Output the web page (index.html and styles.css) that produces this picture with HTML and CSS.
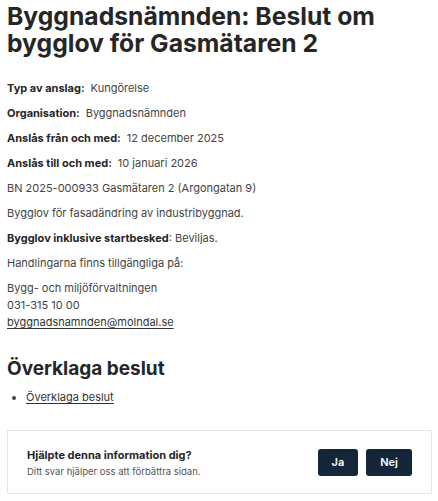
FILE: index.html
```
<!DOCTYPE html>
<html lang="sv">
<head>
<meta charset="utf-8">
<title>Byggnadsnämnden: Beslut om bygglov för Gasmätaren 2</title>
<link rel="stylesheet" href="styles.css">
</head>
<body>
<main class="page">
  <h1 class="title">Byggnadsnämnden: Beslut om bygglov för Gasmätaren 2</h1>
  <dl class="meta">
    <div class="meta-row"><dt>Typ av anslag:</dt><dd>Kungörelse</dd></div>
    <div class="meta-row"><dt>Organisation:</dt><dd>Byggnadsnämnden</dd></div>
    <div class="meta-row"><dt>Anslås från och med:</dt><dd>12 december 2025</dd></div>
    <div class="meta-row"><dt>Anslås till och med:</dt><dd>10 januari 2026</dd></div>
  </dl>
  <p class="para">BN 2025-000933 Gasmätaren 2 (Argongatan 9)</p>
  <p class="para">Bygglov för fasadändring av industribyggnad.</p>
  <p class="para"><strong>Bygglov inklusive startbesked</strong>: Beviljas.</p>
  <p class="para">Handlingarna finns tillgängliga på:</p>
  <p class="para address">Bygg- och miljöförvaltningen<br>031-315 10 00<br><a href="#" class="link">byggnadsnamnden@molndal.se</a></p>
  <h2 class="subtitle">Överklaga beslut</h2>
  <ul class="links">
    <li><a href="#" class="link">Överklaga beslut</a></li>
  </ul>
  <section class="feedback">
    <div class="feedback-text">
      <p class="feedback-q">Hjälpte denna information dig?</p>
      <p class="feedback-sub">Ditt svar hjälper oss att förbättra sidan.</p>
    </div>
    <div class="feedback-btns">
      <button class="btn">Ja</button>
      <button class="btn">Nej</button>
    </div>
  </section>
</main>
</body>
</html>
```
FILE: styles.css
```
* { box-sizing: border-box; }
html, body { margin: 0; padding: 0; background: #fff; }
body {
  font-family: Inter, "Noto Sans", "Liberation Sans", sans-serif;
  color: #2b2b2b;
}
.page { padding: 3px 6px 0 7px; }
.title {
  font-size: 24.7px;
  line-height: 27px;
  font-weight: 700;
  letter-spacing: 0;
  margin: 0 0 23px 0;
  color: #262626;
}
.meta { margin: 0; }
.meta-row {
  display: flex;
  gap: 6px;
  font-size: 11px;
  line-height: 16px;
  margin-bottom: 9px;
}
.meta-row dt { font-weight: 700; color: #262626; }
.meta-row dd { margin: 0; color: #444; }
.para {
  font-size: 11px;
  line-height: 16px;
  margin: 0 0 9px 0;
  color: #444;
}
.para strong { color: #262626; }
.address { line-height: 17px; }
.link { color: #333; text-decoration: underline; text-underline-offset: 2px; }
.subtitle {
  font-size: 19px;
  line-height: 24px;
  font-weight: 700;
  margin: 26px 0 8px 0;
  color: #262626;
}
.links {
  margin: 0;
  padding-left: 19px;
  font-size: 11px;
  line-height: 16px;
  color: #444;
}
.feedback {
  margin-top: 25px;
  border: 1px solid #e5e5e5;
  display: flex;
  align-items: center;
  justify-content: space-between;
  padding: 0 19px;
  height: 64px;
  width: 425px;
}
.feedback-q {
  margin: 0 0 4px 0;
  font-size: 11px;
  font-weight: 700;
  color: #262626;
}
.feedback-sub {
  margin: 0;
  font-size: 9.5px;
  color: #555;
}
.feedback-btns { display: flex; gap: 8px; }
.btn {
  background: #15263b;
  color: #fff;
  border: 0;
  border-radius: 3px;
  font-family: inherit;
  font-size: 11px;
  font-weight: 600;
  height: 27px;
  padding: 0 14px;
}
```
